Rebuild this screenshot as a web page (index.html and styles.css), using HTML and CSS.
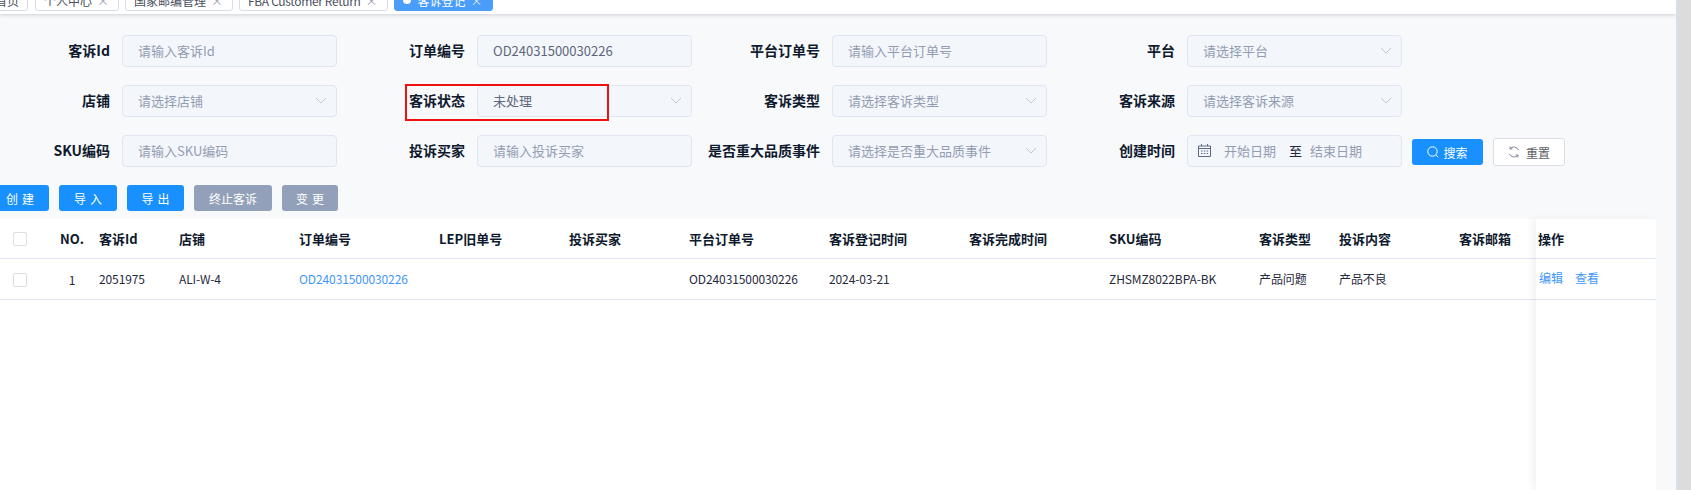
FILE: index.html
```html
<!DOCTYPE html>
<html lang="zh-CN">
<head>
    <meta charset="UTF-8">
    <meta name="viewport" content="width=device-width, initial-scale=1.0">
    <title>客诉登记</title>
    <link rel="stylesheet" href="styles.css">
</head>
<body>
    <div class="app">
        <!-- Tabs -->
        <div class="tab-bar">
            <div class="tab tab-home">首页</div>
            <div class="tab">个人中心<span class="tab-close">×</span></div>
            <div class="tab">国家邮编管理<span class="tab-close">×</span></div>
            <div class="tab tab-latin">FBA Customer Return<span class="tab-close">×</span></div>
            <div class="tab tab-active"><span class="tab-dot"></span>客诉登记<span class="tab-close">×</span></div>
        </div>

        <div class="main">
            <!-- Search form -->
            <div class="search-form">
                <div class="form-row">
                    <div class="field">
                        <label class="field-label">客诉Id</label>
                        <div class="control placeholder">请输入客诉Id</div>
                    </div>
                    <div class="field">
                        <label class="field-label">订单编号</label>
                        <div class="control">OD24031500030226</div>
                    </div>
                    <div class="field">
                        <label class="field-label">平台订单号</label>
                        <div class="control placeholder">请输入平台订单号</div>
                    </div>
                    <div class="field">
                        <label class="field-label">平台</label>
                        <div class="control placeholder">请选择平台
                            <svg class="chevron" viewBox="0 0 12 7"><path d="M1 1l5 5 5-5"/></svg>
                        </div>
                    </div>
                </div>
                <div class="form-row">
                    <div class="field">
                        <label class="field-label">店铺</label>
                        <div class="control placeholder">请选择店铺
                            <svg class="chevron" viewBox="0 0 12 7"><path d="M1 1l5 5 5-5"/></svg>
                        </div>
                    </div>
                    <div class="field field-marked">
                        <label class="field-label">客诉状态</label>
                        <div class="control">未处理
                            <svg class="chevron" viewBox="0 0 12 7"><path d="M1 1l5 5 5-5"/></svg>
                        </div>
                        <div class="red-mark"></div>
                    </div>
                    <div class="field">
                        <label class="field-label">客诉类型</label>
                        <div class="control placeholder">请选择客诉类型
                            <svg class="chevron" viewBox="0 0 12 7"><path d="M1 1l5 5 5-5"/></svg>
                        </div>
                    </div>
                    <div class="field">
                        <label class="field-label">客诉来源</label>
                        <div class="control placeholder">请选择客诉来源
                            <svg class="chevron" viewBox="0 0 12 7"><path d="M1 1l5 5 5-5"/></svg>
                        </div>
                    </div>
                </div>
                <div class="form-row">
                    <div class="field">
                        <label class="field-label">SKU编码</label>
                        <div class="control placeholder">请输入SKU编码</div>
                    </div>
                    <div class="field">
                        <label class="field-label">投诉买家</label>
                        <div class="control placeholder">请输入投诉买家</div>
                    </div>
                    <div class="field">
                        <label class="field-label">是否重大品质事件</label>
                        <div class="control placeholder">请选择是否重大品质事件
                            <svg class="chevron" viewBox="0 0 12 7"><path d="M1 1l5 5 5-5"/></svg>
                        </div>
                    </div>
                    <div class="field">
                        <label class="field-label">创建时间</label>
                        <div class="control control-date placeholder">
                            <svg class="date-icon" viewBox="0 0 13 13"><path d="M.5 2h12v10.500H.5zM.5 4.500h12M3.500 0v2M9.500 0v2M3 7h1.500M5.800 7h1.500M8.600 7h1.500M3 9.500h1.500M5.800 9.500h1.500M8.600 9.500h1.500"/></svg>
                            <span class="date-start">开始日期</span>
                            <span class="date-sep">至</span>
                            <span>结束日期</span>
                        </div>
                    </div>
                    <div class="form-buttons">
                        <button class="btn btn-search">
                            <svg class="btn-icon" viewBox="0 0 12 12"><circle cx="5.500" cy="5.500" r="4.700"/><path d="M9 9l2.300 2.300"/></svg>搜索
                        </button>
                        <button class="btn btn-reset">
                            <svg class="btn-icon" viewBox="0 0 12 12"><path d="M10.500 4.200A5 5 0 0 0 2 2.800M1.500 7.800A5 5 0 0 0 10 9.200"/><path d="M2 .6v2.400h2.400M10 11.400V9H7.600"/></svg>重置
                        </button>
                    </div>
                </div>
            </div>

            <!-- Toolbar -->
            <div class="toolbar">
                <button class="btn btn-primary btn-spaced">创建</button>
                <button class="btn btn-primary btn-spaced">导入</button>
                <button class="btn btn-primary btn-spaced">导出</button>
                <button class="btn btn-muted">终止客诉</button>
                <button class="btn btn-muted btn-spaced">变更</button>
            </div>

            <!-- Table -->
            <div class="table-panel">
                <div class="table-body">
                    <table class="grid">
                        <colgroup>
                            <col class="col-check"><col class="col-no"><col class="col-id"><col class="col-shop">
                            <col class="col-order"><col class="col-lep"><col class="col-buyer"><col class="col-platform">
                            <col class="col-time"><col class="col-time"><col class="col-sku"><col class="col-type">
                            <col class="col-content"><col class="col-mail">
                        </colgroup>
                        <thead>
                            <tr>
                                <th class="cell-check"><span class="checkbox"></span></th>
                                <th class="cell-no">NO.</th>
                                <th>客诉Id</th>
                                <th>店铺</th>
                                <th>订单编号</th>
                                <th>LEP旧单号</th>
                                <th>投诉买家</th>
                                <th>平台订单号</th>
                                <th>客诉登记时间</th>
                                <th>客诉完成时间</th>
                                <th>SKU编码</th>
                                <th>客诉类型</th>
                                <th>投诉内容</th>
                                <th>客诉邮箱</th>
                            </tr>
                        </thead>
                        <tbody>
                            <tr>
                                <td class="cell-check"><span class="checkbox"></span></td>
                                <td class="cell-no">1</td>
                                <td>2051975</td>
                                <td>ALI-W-4</td>
                                <td><a class="link">OD24031500030226</a></td>
                                <td></td>
                                <td></td>
                                <td>OD24031500030226</td>
                                <td>2024-03-21</td>
                                <td></td>
                                <td>ZHSMZ8022BPA-BK</td>
                                <td>产品问题</td>
                                <td>产品不良</td>
                                <td></td>
                            </tr>
                        </tbody>
                    </table>
                </div>
                <div class="table-fixed">
                    <table class="grid">
                        <thead>
                            <tr><th>操作</th></tr>
                        </thead>
                        <tbody>
                            <tr>
                                <td><a class="link">编辑</a><a class="link link-next">查看</a></td>
                            </tr>
                        </tbody>
                    </table>
                </div>
            </div>
        </div>
    </div>
    <div class="side-strip"></div>
</body>
</html>
```

FILE: styles.css
```css
html, body {
    height: 100%;
}
body {
    margin: 0;
    display: flex;
    overflow: hidden;
    font-family: "Noto Sans CJK SC", "Noto Sans", sans-serif;
    font-size: 12px;
    color: #1f2a3d;
    background-color: #dcdcdc;
}
.app {
    width: 1676px;
    flex-shrink: 0;
    display: flex;
    flex-direction: column;
    overflow: hidden;
    background-color: #f8f9fb;
}
.side-strip {
    width: 1px;
    background-color: #cfe3f6;
}
.main {
    flex: 1;
    min-height: 0;
    display: flex;
    flex-direction: column;
}

/* tabs */
.tab-bar {
    position: relative;
    z-index: 2;
    height: 14px;
    flex-shrink: 0;
    display: flex;
    align-items: flex-end;
    gap: 6px;
    padding: 0 0 3px 0;
    box-sizing: border-box;
    background-color: #fff;
    box-shadow: 0 1px 4px rgba(0, 21, 41, 0.18);
}
.tab {
    height: 22px;
    flex-shrink: 0;
    display: flex;
    align-items: center;
    box-sizing: border-box;
    padding: 0 11px 0 8px;
    color: #495060;
    background-color: #fff;
    border: 1px solid #d8dce5;
    border-radius: 3px;
}
.tab-home {
    margin-left: -14px;
    margin-right: 1px;
    padding: 0 8px;
}
.tab-latin {
    letter-spacing: -0.35px;
}
.tab-close {
    margin-left: 5px;
    width: 10px;
    text-align: center;
    color: #9aa3b2;
}
.tab-active {
    color: #fff;
    background-color: #4a9df8;
    border-color: #4a9df8;
}
.tab-active .tab-close {
    color: #dbeafe;
}
.tab-dot {
    width: 8px;
    height: 8px;
    margin-right: 7px;
    border-radius: 50%;
    background-color: #fff;
}

/* search form */
.search-form {
    display: flex;
    flex-direction: column;
    gap: 18px;
    padding-top: 21px;
    margin-left: -18px;
}
.form-row {
    display: flex;
}
.field {
    position: relative;
    width: 355px;
    flex-shrink: 0;
    display: flex;
    align-items: center;
}
.field-label {
    width: 140px;
    flex-shrink: 0;
    padding: 0 12px 2px 0;
    box-sizing: border-box;
    text-align: right;
    font-size: 14px;
    font-weight: 700;
    color: #0f1a2e;
    white-space: nowrap;
}
.control {
    position: relative;
    width: 215px;
    height: 32px;
    box-sizing: border-box;
    padding: 0 15px 2px;
    display: flex;
    align-items: center;
    font-size: 13px;
    color: #5d6679;
    white-space: nowrap;
    background-color: #f3f6fb;
    border: 1px solid #dfe5f2;
    border-radius: 4px;
}
.placeholder {
    color: #939db2;
}
.chevron {
    position: absolute;
    right: 9px;
    top: 11px;
    width: 12px;
    height: 7px;
    fill: none;
    stroke: #c0c6d2;
    stroke-width: 1;
}
.red-mark {
    position: absolute;
    left: 68px;
    top: -1px;
    width: 204px;
    height: 37px;
    box-sizing: border-box;
    border: 2px solid #f01010;
    pointer-events: none;
}
.control-date {
    padding-left: 10px;
}
.date-icon {
    width: 13px;
    height: 13px;
    flex-shrink: 0;
    fill: none;
    stroke: #5f6b85;
    stroke-width: 1;
}
.date-start {
    margin-left: 13px;
}
.date-sep {
    margin: 0 8px 0 13px;
    color: #1f2a3d;
}
.form-buttons {
    display: flex;
    align-items: center;
    gap: 10px;
    margin-left: 10px;
    padding-top: 2px;
}

/* buttons */
.btn {
    height: 26px;
    padding: 0;
    display: inline-flex;
    align-items: center;
    justify-content: center;
    font-family: inherit;
    font-size: 12px;
    color: #fff;
    border: 0;
    border-radius: 3px;
}
.btn-icon {
    width: 12px;
    height: 12px;
    margin-right: 4px;
    fill: none;
    stroke: currentColor;
    stroke-width: 1;
}
.btn-search {
    width: 71px;
    background-color: #1890ff;
}
.btn-reset {
    width: 72px;
    height: 28px;
    color: #5d6166;
    background-color: #fff;
    border: 1px solid #dcdfe6;
}
.btn-reset .btn-icon {
    stroke: #7d8594;
    margin-right: 6px;
}
.toolbar {
    display: flex;
    gap: 10px;
    margin: 18px 0 8px -9px;
}
.toolbar .btn {
    width: 58px;
}
.toolbar .btn-muted:nth-child(4) {
    width: 78px;
}
.toolbar .btn-muted:nth-child(5) {
    width: 56px;
}
.toolbar .btn:nth-child(3) {
    width: 57px;
}
.btn-primary {
    background-color: #1890ff;
}
.btn-muted {
    background-color: #92a1b9;
}
.btn-spaced {
    letter-spacing: 4px;
    text-indent: 4px;
}

/* table */
.table-panel {
    flex: 1;
    min-height: 0;
    width: 1665px;
    margin-left: -9px;
    display: flex;
    background-color: #fff;
}
.table-body {
    flex: 1;
    min-width: 0;
    overflow: hidden;
}
.table-fixed {
    position: relative;
    width: 120px;
    flex-shrink: 0;
    background-color: #fff;
    box-shadow: -4px 0 8px rgba(0, 0, 0, 0.05);
}
.grid {
    table-layout: fixed;
    border-collapse: separate;
    border-spacing: 0;
    width: 100%;
}
.table-body .grid {
    width: 1545px;
}
.grid th, .grid td {
    padding: 0 10px;
    text-align: left;
    white-space: nowrap;
    box-sizing: border-box;
    border-bottom: 1px solid #e2e6f0;
}
.grid th {
    height: 40px;
    font-size: 13px;
    font-weight: 600;
    color: #0f1a2e;
    border-bottom-color: #dfe5f5;
}
.grid td {
    height: 41px;
    padding-bottom: 2px;
    letter-spacing: -0.1px;
    color: #1f2a3d;
}
.table-fixed th {
    padding-left: 2px;
}
.table-fixed td {
    padding: 0 0 4px 3px;
    letter-spacing: 0;
}
.col-check { width: 64px; }
.col-no { width: 34px; }
.col-id { width: 80px; }
.col-shop { width: 120px; }
.col-order { width: 140px; }
.col-lep { width: 130px; }
.col-buyer { width: 120px; }
.col-platform { width: 140px; }
.col-time { width: 140px; }
.col-sku { width: 150px; }
.col-type { width: 80px; }
.col-content { width: 120px; }
.col-mail { width: 87px; }
.grid .cell-check {
    padding: 0 0 0 22px;
}
.grid td.cell-check {
    padding-top: 2px;
}
.grid .cell-no {
    padding: 0;
    text-align: center;
}
.checkbox {
    display: block;
    width: 14px;
    height: 14px;
    box-sizing: border-box;
    background-color: #fff;
    border: 1px solid #dcdfe6;
    border-radius: 2px;
}
.link {
    color: #3f96fa;
}
.link-next {
    margin-left: 12px;
}
```
